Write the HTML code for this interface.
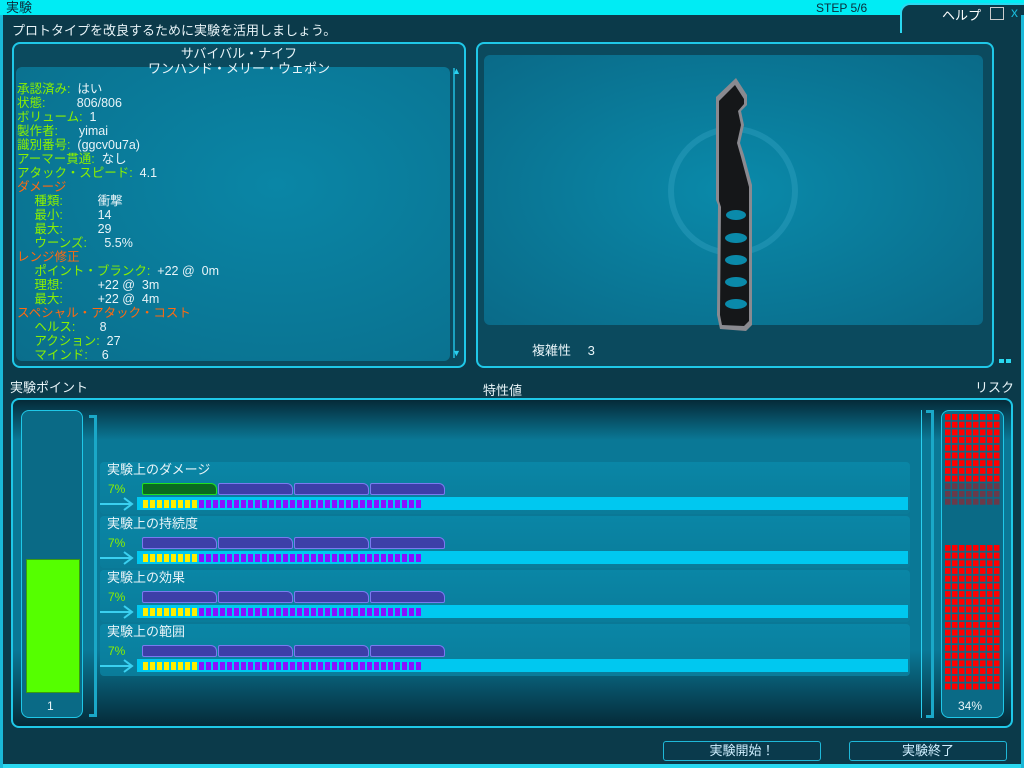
<!DOCTYPE html><html><head><meta charset="utf-8"><style>
*{margin:0;padding:0;box-sizing:border-box}
body{width:1024px;height:768px;overflow:hidden;background:#0b3a4a;font-family:"Liberation Sans","Noto Sans CJK JP",sans-serif;font-size:12px;color:#e8f4f8;position:relative}
.a{position:absolute}
.g{color:#8af000}.o{color:#ff6a10}
.box{position:absolute;border:2px solid #1fc8e8;border-radius:8px}
.row{position:absolute;left:100px;width:810px;height:52px;background:linear-gradient(#0a86a6,#0a7c9a);border-radius:4px}
.seg{position:absolute;top:21px;height:12px;width:75px;background:#3d3fa8;border:1px solid #7a7af0;border-radius:2px 6px 2px 2px}
.cy{position:absolute;left:37px;top:35px;width:771px;height:13px;background:#00c8f0}
.cells{position:absolute;left:43px;top:38px;width:279px;height:8px;background:repeating-linear-gradient(90deg,#8a10ff 0 5px,transparent 5px 7px)}
.yel{position:absolute;left:43px;top:38px;width:56px;height:8px;background:repeating-linear-gradient(90deg,#ffee00 0 5px,#00c8f0 5px 7px)}
.arr{position:absolute;left:0px;top:35px}
.btn{position:absolute;height:20px;border:1px solid #1fb8d8;border-radius:3px;background:#0a3a4c;text-align:center;line-height:18px;font-size:13px;color:#cfefff}
</style></head><body>
<div class="a" style="left:0;top:0;width:1024px;height:15px;background:#00ecf4"></div>
<div class="a" style="left:900px;top:3px;width:124px;height:30px;background:#0b3a4a;border-top:2px solid #2ad8f0;border-left:2px solid #2ad8f0;border-radius:10px 0 0 0"></div>
<div class="a" style="left:6px;top:0;font-size:13px;color:#0a2a3a;line-height:15px">実験</div>
<div class="a" style="left:816px;top:1px;font-size:12px;color:#0a2a3a">STEP 5/6</div>
<div class="a" style="left:942px;top:5px;font-size:13px;color:#fff">ヘルプ</div>
<div class="a" style="left:990px;top:7px;width:14px;height:13px;border:1px solid #ccc"></div>
<div class="a" style="left:1011px;top:4px;color:#1ab8d8;font-size:14px">x</div>
<div class="a" style="left:12px;top:20px;font-size:13px">プロトタイプを改良するために実験を活用しましょう。</div>

<div class="box" style="left:12px;top:42px;width:454px;height:326px;background:#0b4a5e"></div>
<div class="a" style="left:16px;top:67px;width:434px;height:294px;background:radial-gradient(ellipse at 60% 40%,#0a86a6,#0a6e8c);border-radius:6px"></div>
<div class="a" style="left:453px;top:68px;width:8px;height:290px;border-left:2px solid #1fb8d8;opacity:.8"></div>
<div class="a" style="left:452px;top:66px;color:#2ad0f0;font-size:9px">▲</div><div class="a" style="left:452px;top:348px;color:#2ad0f0;font-size:9px">▼</div>
<div class="a" style="left:12px;top:46px;width:454px;text-align:center;font-size:13px;line-height:15px">サバイバル・ナイフ<br>ワンハンド・メリー・ウェポン</div>
<div class="a" style="left:17px;top:82px;line-height:14px;font-size:12.5px;white-space:pre;height:278px;overflow:hidden"><span class="g">承認済み:</span>  はい
<span class="g">状態:</span>         806/806
<span class="g">ボリューム:</span>  1
<span class="g">製作者:</span>      yimai
<span class="g">識別番号:</span>  (ggcv0u7a)
<span class="g">アーマー貫通:</span>  なし
<span class="g">アタック・スピード:</span>  4.1
<span class="o">ダメージ</span>
     <span class="g">種類:</span>          衝撃
     <span class="g">最小:</span>          14
     <span class="g">最大:</span>          29
     <span class="g">ウーンズ:</span>     5.5%
<span class="o">レンジ修正</span>
     <span class="g">ポイント・ブランク:</span>  +22 @  0m
     <span class="g">理想:</span>          +22 @  3m
     <span class="g">最大:</span>          +22 @  4m
<span class="o">スペシャル・アタック・コスト</span>
     <span class="g">ヘルス:</span>       8
     <span class="g">アクション:</span>  27
     <span class="g">マインド:</span>    6</div>

<div class="box" style="left:476px;top:42px;width:518px;height:326px;background:#0b4a5e"></div>
<div class="a" style="left:484px;top:55px;width:499px;height:270px;background:radial-gradient(ellipse at 50% 50%,#0a8aaa,#0a6a88);border-radius:6px"></div>
<div class="a" style="left:668px;top:126px;width:130px;height:130px;border:6px solid rgba(60,170,200,.35);border-radius:50%"></div>
<svg class="a" style="left:700px;top:75px" width="70" height="260" viewBox="0 0 70 260">
<path d="M36 3 L47 20 L47 30 L41 36 L44 50 L40 68 L44 80 L52 110 L52 250 L46 256 L20 254 L17 240 L18 130 L16 125 L16 22 Z" fill="#8a8a90"/>
<path d="M35 10 L44 24 L44 29 L38 36 L41 50 L37 68 L41 82 L49 112 L49 246 L44 251 L22 250 L20 240 L21 132 L19 126 L19 26 Z" fill="#151719"/>
<g fill="#0a8aaa"><ellipse cx="36" cy="140" rx="10" ry="5"/><ellipse cx="36" cy="163" rx="11" ry="5"/><ellipse cx="36" cy="185" rx="11" ry="5"/><ellipse cx="36" cy="207" rx="11" ry="5"/><ellipse cx="36" cy="229" rx="11" ry="5"/></g></svg>
<div class="a" style="left:532px;top:340px;font-size:13px">複雑性　 3</div>
<div class="a" style="left:999px;top:359px;width:5px;height:4px;background:#2ad8f0"></div><div class="a" style="left:1006px;top:359px;width:5px;height:4px;background:#2ad8f0"></div>

<div class="a" style="left:10px;top:377px;font-size:13px">実験ポイント</div>
<div class="a" style="left:483px;top:380px;font-size:13px">特性値</div>
<div class="a" style="left:975px;top:377px;font-size:13px">リスク</div>

<div class="box" style="left:11px;top:398px;width:1002px;height:330px;background:linear-gradient(#052a38 0,#0a7896 40px,#0a7896 250px,#052a38 100%)"></div>
<div class="a" style="left:21px;top:410px;width:62px;height:308px;border:1px solid #1fc8e8;border-radius:8px;background:#0a6a86"></div>
<div class="a" style="left:26px;top:559px;width:54px;height:134px;background:#55ff00;border:1px solid #3a9a10"></div>
<div class="a" style="left:47px;top:699px;font-size:12px">1</div>
<div class="a" style="left:89px;top:415px;width:8px;height:302px;border:3px solid #1aa8c8;border-left:none"></div>
<div class="a" style="left:921px;top:410px;width:1px;height:308px;background:#2ad0f0"></div>
<div class="a" style="left:926px;top:410px;width:8px;height:308px;border:3px solid #1aa8c8;border-left:none"></div>

<div class="row" style="top:462px"><div class="a" style="left:7px;top:-3px;font-size:13px">実験上のダメージ</div><div class="a g" style="left:8px;top:20px;font-size:12px">7%</div>
<div class="seg" style="left:42px;background:#0a6a20;border-color:#20e020"></div><div class="seg" style="left:118px"></div><div class="seg" style="left:194px"></div><div class="seg" style="left:270px"></div><div class="cy"></div><div class="cells"></div><div class="yel"></div><svg class="arr" width="34" height="14"><path d="M0 7H32M24 1L32 7L24 13" stroke="#3ad0f0" stroke-width="2" fill="none"/></svg></div>
<div class="row" style="top:516px"><div class="a" style="left:7px;top:-3px;font-size:13px">実験上の持続度</div><div class="a g" style="left:8px;top:20px;font-size:12px">7%</div>
<div class="seg" style="left:42px"></div><div class="seg" style="left:118px"></div><div class="seg" style="left:194px"></div><div class="seg" style="left:270px"></div><div class="cy"></div><div class="cells"></div><div class="yel"></div><svg class="arr" width="34" height="14"><path d="M0 7H32M24 1L32 7L24 13" stroke="#3ad0f0" stroke-width="2" fill="none"/></svg></div>
<div class="row" style="top:570px"><div class="a" style="left:7px;top:-3px;font-size:13px">実験上の効果</div><div class="a g" style="left:8px;top:20px;font-size:12px">7%</div>
<div class="seg" style="left:42px"></div><div class="seg" style="left:118px"></div><div class="seg" style="left:194px"></div><div class="seg" style="left:270px"></div><div class="cy"></div><div class="cells"></div><div class="yel"></div><svg class="arr" width="34" height="14"><path d="M0 7H32M24 1L32 7L24 13" stroke="#3ad0f0" stroke-width="2" fill="none"/></svg></div>
<div class="row" style="top:624px"><div class="a" style="left:7px;top:-3px;font-size:13px">実験上の範囲</div><div class="a g" style="left:8px;top:20px;font-size:12px">7%</div>
<div class="seg" style="left:42px"></div><div class="seg" style="left:118px"></div><div class="seg" style="left:194px"></div><div class="seg" style="left:270px"></div><div class="cy"></div><div class="cells"></div><div class="yel"></div><svg class="arr" width="34" height="14"><path d="M0 7H32M24 1L32 7L24 13" stroke="#3ad0f0" stroke-width="2" fill="none"/></svg></div>

<div class="a" style="left:941px;top:410px;width:63px;height:308px;border:1px solid #1fc8e8;border-radius:8px;background:#0a6a86"></div>
<svg class="a" style="left:945px;top:414px" width="56" height="280">
<defs><pattern id="r" width="7" height="7.7" patternUnits="userSpaceOnUse"><rect width="5.5" height="6" fill="#ff0000"/></pattern>
<pattern id="d" width="7" height="7.7" patternUnits="userSpaceOnUse"><rect width="5.5" height="6" fill="#6a3a4a"/></pattern></defs>
<rect x="0" y="0" width="56" height="69" fill="url(#r)"/>
<rect x="0" y="69" width="56" height="23" fill="url(#d)"/>
<rect x="0" y="131" width="56" height="146" fill="url(#r)"/>
</svg>
<div class="a" style="left:958px;top:699px;font-size:12px">34%</div>

<div class="btn" style="left:663px;top:741px;width:158px">実験開始！</div>
<div class="btn" style="left:849px;top:741px;width:158px">実験終了</div>
<div class="a" style="left:0;top:764px;width:1024px;height:4px;background:#2ad8f0"></div>
<div class="a" style="left:0;top:15px;width:3px;height:753px;background:#1ab8d8"></div>
<div class="a" style="left:1021px;top:15px;width:3px;height:753px;background:#1ab8d8"></div>
</body></html>
